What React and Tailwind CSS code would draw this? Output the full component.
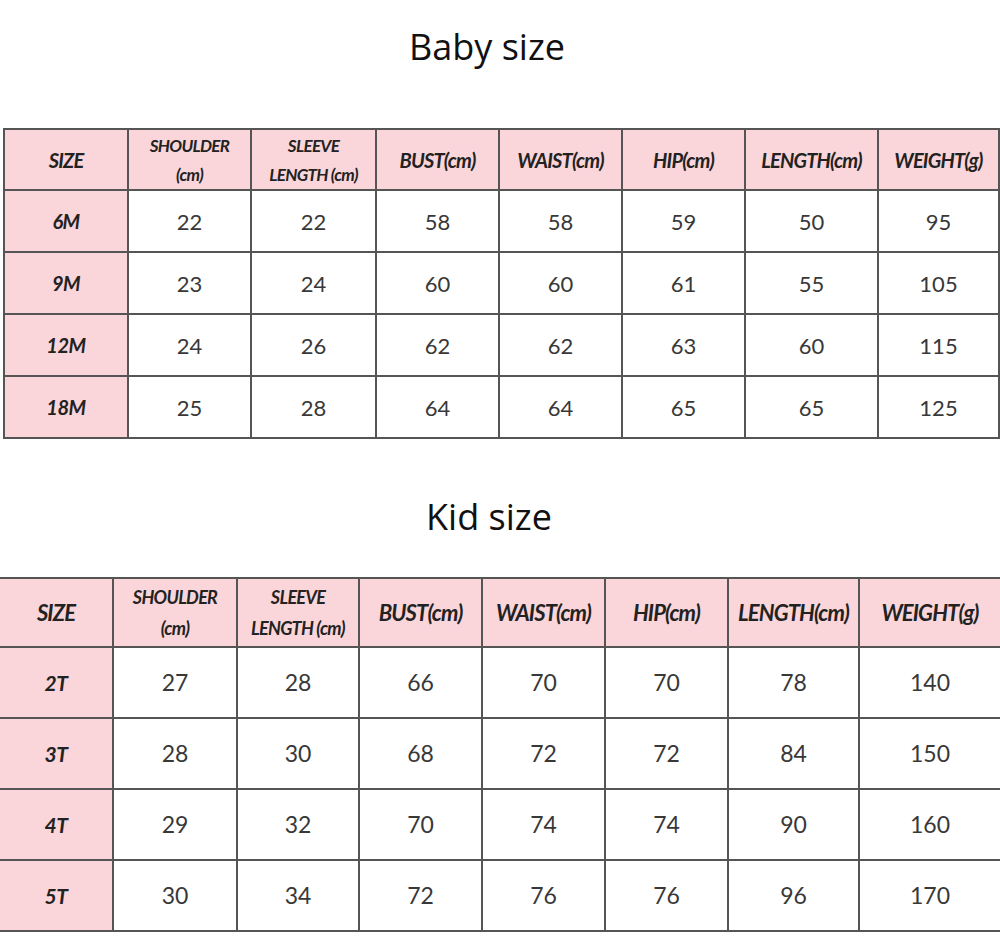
import React from 'react';

const headers = [
    ['SIZE'],
    ['SHOULDER', '(cm)'],
    ['SLEEVE', 'LENGTH (cm)'],
    ['BUST(cm)'],
    ['WAIST(cm)'],
    ['HIP(cm)'],
    ['LENGTH(cm)'],
    ['WEIGHT(g)'],
];

const baby = [
    ['6M', 22, 22, 58, 58, 59, 50, 95],
    ['9M', 23, 24, 60, 60, 61, 55, 105],
    ['12M', 24, 26, 62, 62, 63, 60, 115],
    ['18M', 25, 28, 64, 64, 65, 65, 125],
];

const kid = [
    ['2T', 27, 28, 66, 70, 70, 78, 140],
    ['3T', 28, 30, 68, 72, 72, 84, 150],
    ['4T', 29, 32, 70, 74, 74, 90, 160],
    ['5T', 30, 34, 72, 76, 76, 96, 170],
];

const babyCols = [124, 123, 125, 123, 123, 123, 133, 121];
const kidCols = [113, 124, 122, 123, 123, 123, 131, 141];

function SizeTable({ cols, rows, headH, rowH, big, className }) {
    return (
        <table className={`table-fixed border-collapse ${className}`}>
            <colgroup>
                {cols.map((w, i) => <col key={i} style={{ width: w }} />)}
            </colgroup>
            <thead>
                <tr style={{ height: headH }}>
                    {headers.map((h, i) => (
                        <th
                            key={i}
                            className={`bg-[#fad6da] border-2 border-[#555] p-0 text-center align-middle font-[Lato,sans-serif] font-bold italic text-[#222] ${big && i === 0 ? 'border-l-0' : ''} ${big && i === 7 ? 'border-r-0' : ''}`}
                        >
                            {h.length === 2 ? (
                                <div className={`${big ? 'text-[18px] leading-[31px]' : 'text-[17px] leading-[29px]'} tracking-[-0.04em]`}>
                                    <div>{h[0]}</div>
                                    <div>{h[1]}</div>
                                </div>
                            ) : (
                                <div className={`${big ? 'text-[22px]' : 'text-[20px]'} tracking-[-0.04em]`}>{h[0]}</div>
                            )}
                        </th>
                    ))}
                </tr>
            </thead>
            <tbody>
                {rows.map(r => (
                    <tr key={r[0]} style={{ height: rowH }}>
                        {r.map((v, i) =>
                            i === 0 ? (
                                <td key={i} className={`bg-[#fad6da] border-2 border-[#555] text-center font-[Lato,sans-serif] font-bold italic text-[#222] tracking-tight ${big ? 'text-[21px] border-l-0' : 'text-[20px]'}`}>
                                    {v}
                                </td>
                            ) : (
                                <td key={i} className={`bg-white border-2 border-[#555] text-center font-[Lato,sans-serif] text-[#383838] ${big ? 'text-[23px]' : 'text-[22px]'} ${big && i === 7 ? 'border-r-0' : ''}`}>
                                    {v}
                                </td>
                            )
                        )}
                    </tr>
                ))}
            </tbody>
        </table>
    );
}

export default function App() {
    return (
        <div className="w-[1000px] h-[943px] bg-white overflow-hidden">
            <div className="h-[128px] pt-[25px] pr-[26px] text-center font-['Open_Sans',sans-serif] text-[36px] leading-[44px] text-[#111]">Baby size</div>
            <SizeTable cols={babyCols} rows={baby} headH={61} rowH={62} className="ml-[3px] w-[995px]" />
            <div className="h-[138px] pt-[56px] pr-[22px] text-center font-['Open_Sans',sans-serif] text-[36px] leading-[44px] text-[#111]">Kid size</div>
            <SizeTable cols={kidCols} rows={kid} headH={69} rowH={71} big className="w-[1000px]" />
        </div>
    );
}
